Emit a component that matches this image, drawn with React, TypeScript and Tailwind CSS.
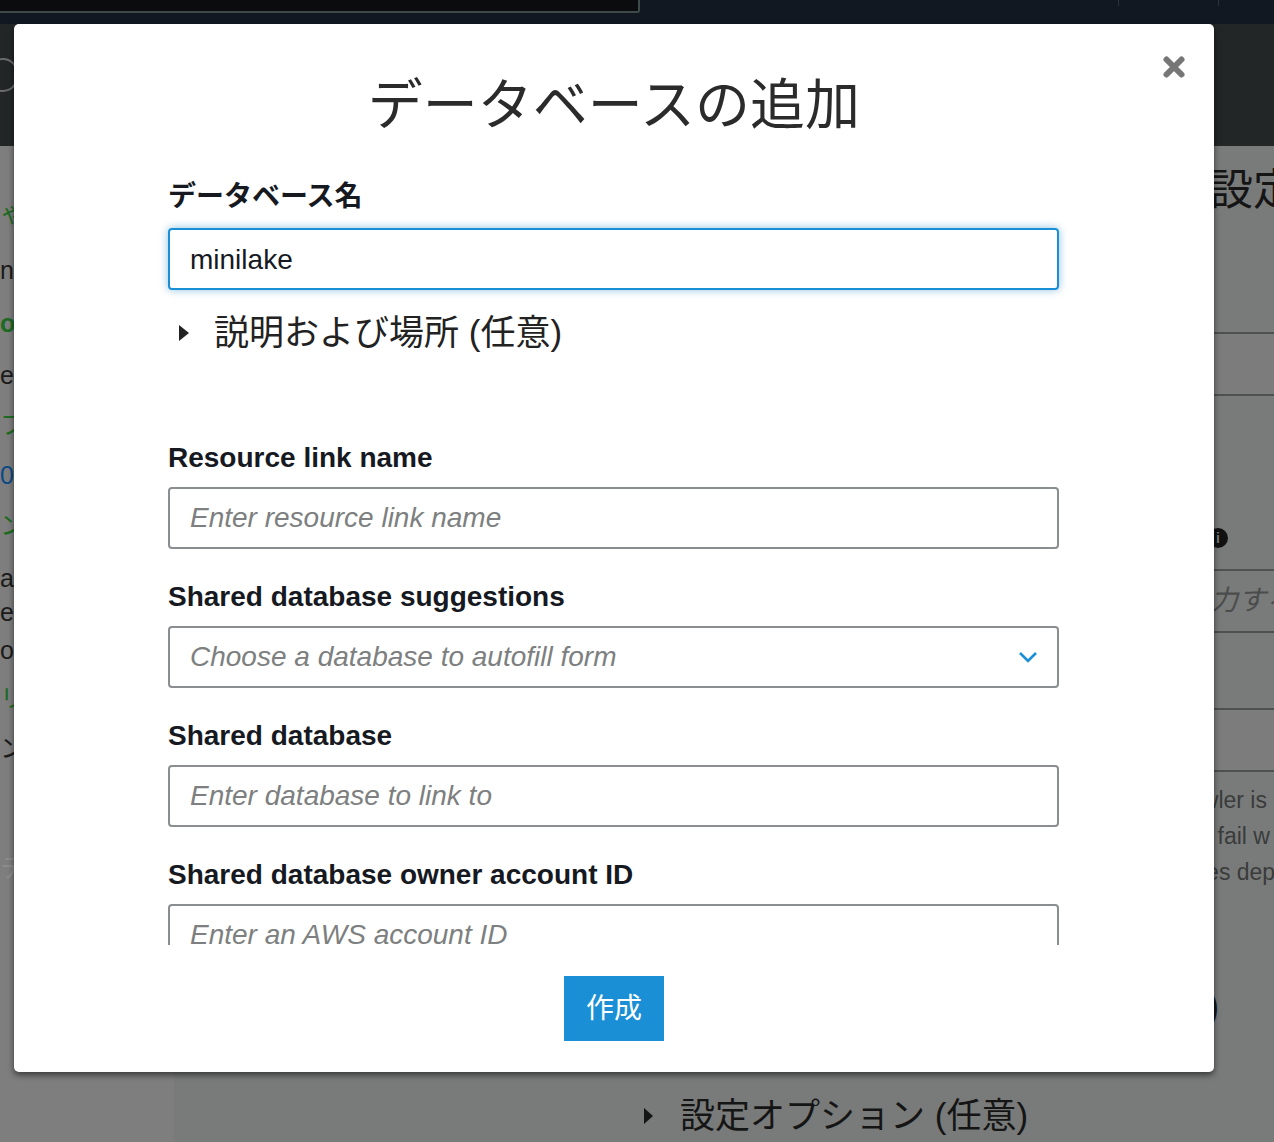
import React from "react";

const sideItems = [
  { t: "ゃ情報", c: "mt-[53px] text-[#1d6b23]" },
  { t: "nT", c: "mt-[29px] text-[#1b1b1b]" },
  { t: "ou", c: "mt-[25px] text-[#1d6b23] font-bold" },
  { t: "es", c: "mt-[24px] text-[#1b1b1b]" },
  { t: " フ", c: "mt-[22px] text-[#1d6b23]" },
  { t: "02", c: "mt-[22px] text-[#0b4a86]" },
  { t: "ン", c: "mt-[22px] text-[#1d6b23]" },
  { t: "an", c: "mt-[25px] text-[#1b1b1b]" },
  { t: "e/", c: "mt-[6px] text-[#1b1b1b]" },
  { t: "o", c: "mt-[10px] text-[#1b1b1b]" },
  { t: "リ", c: "mt-[20px] text-[#1d6b23]" },
  { t: "ン", c: "mt-[22px] text-[#1b1b1b]" },
  { t: "テ", c: "mt-[92px] text-[#8c8c8c]" },
];

const Field = ({ label, placeholder, mt }: { label: string; placeholder: string; mt: string }) => (
  <div className={mt}>
    <div className="h-[32px] leading-[32px] text-[28px] font-bold text-[#16191f]">{label}</div>
    <div className="mt-[13px] h-[62px] w-[891px] rounded-[4px] border-2 border-[#8b8e91] flex items-center px-[20px]">
      <span className="text-[28px] italic text-[#7d7f80]">{placeholder}</span>
    </div>
  </div>
);

export default function App() {
  return (
    <div
      className="relative w-[1274px] h-[1142px] overflow-hidden bg-[#797b7a]"
      style={{ fontFamily: '"Liberation Sans", "Noto Sans CJK JP", sans-serif' }}
    >
      {/* background page (dimmed) */}
      <div className="h-[24px] bg-[#121821] flex">
        <div className="w-[640px] h-[13px] bg-[#0b0c0e] border-b-2 border-r-2 border-[#3f4a48] rounded-br-[3px]" />
        <div className="ml-[478px] w-[1px] h-[6px] bg-[#2e333a]" />
        <div className="ml-[99px] w-[1px] h-[6px] bg-[#2e333a]" />
      </div>
      <div className="h-[122px] bg-[#232627] flex items-center">
        <div className="ml-[-12px] mt-[-20px] w-[30px] h-[34px] rounded-full border-2 border-[#6b6c6c]" />
      </div>
      <div className="flex h-[996px]">
        <div className="w-[174px] shrink-0 bg-[#7e7e7e] flex flex-col text-[25px] leading-[28px] whitespace-nowrap">
          {sideItems.map((s, i) => (
            <div key={i} className={s.c}>
              {s.t}
            </div>
          ))}
        </div>
        <div className="flex-1 whitespace-nowrap overflow-hidden">
          <div className="h-[186px] pt-[20px]">
            <div className="ml-[1036px] text-[43px] leading-[48px] text-[#151515]">設定</div>
          </div>
          <div className="h-[64px] border-y-2 border-[#4f5050] bg-[#7b7c7b]" />
          <div className="h-[173px] flex items-end pb-[21px]">
            <div className="ml-[1034px] w-[20px] h-[20px] rounded-full bg-[#111] text-[#7a7b7a] text-[14px] font-bold leading-[20px] text-center">
              i
            </div>
          </div>
          <div className="h-[64px] border-y-2 border-[#4f5050] flex items-center">
            <span className="ml-[1008px] text-[28px] italic text-[#4b4c4c]">入力する</span>
          </div>
          <div className="h-[75px]" />
          <div className="h-[64px] border-y-2 border-[#4f5050] bg-[#7b7c7b]" />
          <div className="mt-[10px] text-[23px] leading-[36px] text-[#3a3b3b]">
            <div className="ml-[1015px]">awler is</div>
            <div className="ml-[1032px]">l fail w</div>
            <div className="ml-[1027px]">ies dep</div>
          </div>
          <div className="mt-[92px] ml-[992px] text-[40px] leading-[48px] text-[#151515]">意)</div>
          <div className="mt-[64px] ml-[470px] flex items-center text-[35px] leading-[44px] text-[#151515]">
            <svg width="10" height="16" viewBox="0 0 10 16" className="mr-[26px]">
              <polygon points="0,0 9,8 0,16" fill="#151515" />
            </svg>
            設定オプション (任意)
          </div>
        </div>
      </div>

      {/* modal */}
      <div className="absolute left-[14px] top-[24px] w-[1200px] h-[1048px] bg-white rounded-[5px] shadow-[0_3px_6px_rgba(0,0,0,0.55)] flex flex-col">
        <button className="absolute left-[1148px] top-[31px] w-[24px] h-[24px]">
          <svg width="24" height="24" viewBox="0 0 24 24">
            <path d="M4.5 4.5 L19.5 19.5 M19.5 4.5 L4.5 19.5" stroke="#767676" strokeWidth="6" strokeLinecap="round" />
          </svg>
        </button>
        <div className="h-[921px] shrink-0 overflow-hidden">
          <h2 className="mt-[49px] text-center text-[55px] leading-[64px] font-normal text-[#2b2b2b]">
            データベースの追加
          </h2>
          <div className="pl-[154px]">
            <div className="mt-[44px] h-[32px] leading-[32px] text-[28px] font-bold text-[#16191f]">
              データベース名
            </div>
            <div className="mt-[15px] h-[62px] w-[891px] rounded-[4px] border-2 border-[#1a8fd6] shadow-[0_0_8px_rgba(0,115,187,0.45)] flex items-center px-[20px]">
              <span className="text-[28px] text-[#16191f] mt-[2px]">minilake</span>
            </div>
            <div className="mt-[23px] h-[40px] flex items-center text-[35px] text-[#222]">
              <svg width="10" height="16" viewBox="0 0 10 16" className="ml-[11px] mr-[25px]">
                <polygon points="0,0 10,8 0,16" fill="#222" />
              </svg>
              説明および場所 (任意)
            </div>
            <Field mt="mt-[89px]" label="Resource link name" placeholder="Enter resource link name" />
            <div className="mt-[32px]">
              <div className="h-[32px] leading-[32px] text-[28px] font-bold text-[#16191f]">
                Shared database suggestions
              </div>
              <div className="mt-[13px] h-[62px] w-[891px] rounded-[4px] border-2 border-[#8b8e91] flex items-center justify-between pl-[20px] pr-[19px]">
                <span className="text-[28px] italic text-[#7d7f80]">Choose a database to autofill form</span>
                <svg width="20" height="12" viewBox="0 0 20 12">
                  <path d="M2 2 L10 10 L18 2" fill="none" stroke="#1a8fd6" strokeWidth="2.6" />
                </svg>
              </div>
            </div>
            <Field mt="mt-[32px]" label="Shared database" placeholder="Enter database to link to" />
            <Field mt="mt-[32px]" label="Shared database owner account ID" placeholder="Enter an AWS account ID" />
          </div>
        </div>
        <div className="flex justify-center pt-[31px]">
          <button className="w-[100px] h-[65px] bg-[#1a8fd6] text-white text-[28px]">作成</button>
        </div>
      </div>
    </div>
  );
}
